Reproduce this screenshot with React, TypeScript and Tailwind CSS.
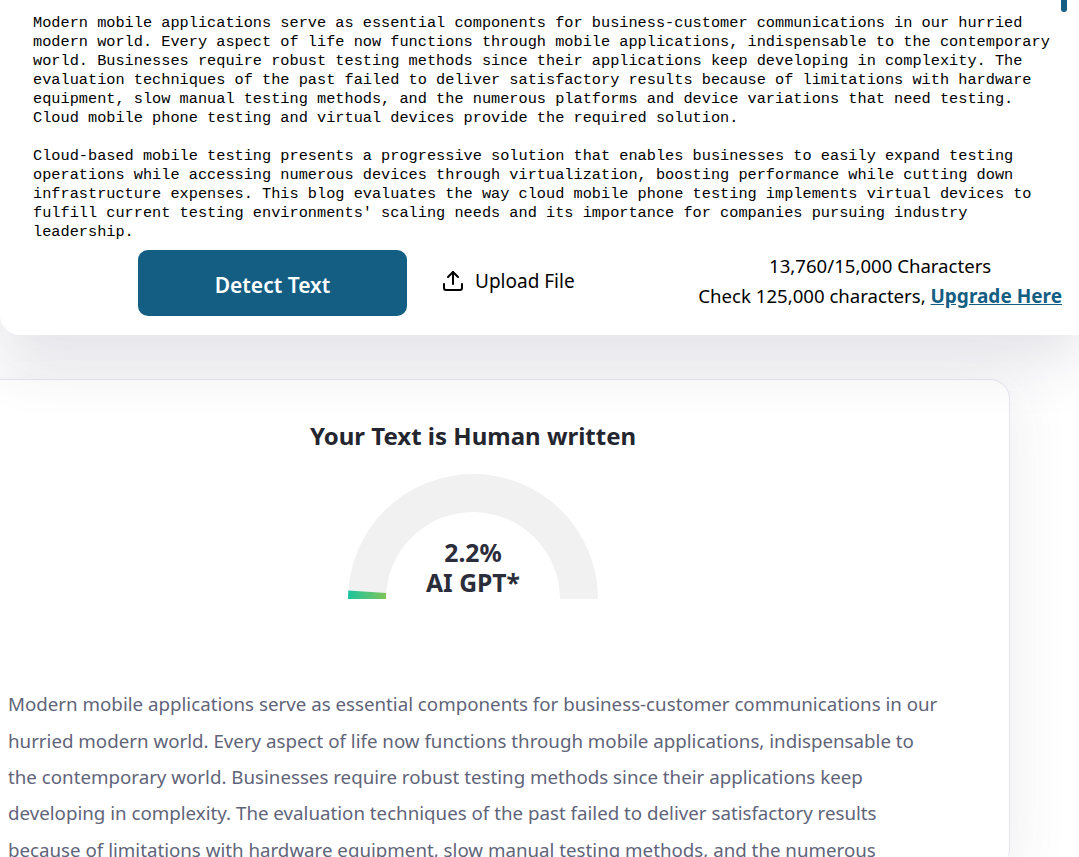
import { Upload } from "lucide-react";

const SANS = "font-['Noto_Sans',sans-serif]";

const inputText = `Modern mobile applications serve as essential components for business-customer communications in our hurried
modern world. Every aspect of life now functions through mobile applications, indispensable to the contemporary
world. Businesses require robust testing methods since their applications keep developing in complexity. The
evaluation techniques of the past failed to deliver satisfactory results because of limitations with hardware
equipment, slow manual testing methods, and the numerous platforms and device variations that need testing.
Cloud mobile phone testing and virtual devices provide the required solution.

Cloud-based mobile testing presents a progressive solution that enables businesses to easily expand testing
operations while accessing numerous devices through virtualization, boosting performance while cutting down
infrastructure expenses. This blog evaluates the way cloud mobile phone testing implements virtual devices to
fulfill current testing environments' scaling needs and its importance for companies pursuing industry
leadership.`;

const resultLines = [
  "Modern mobile applications serve as essential components for business-customer communications in our",
  "hurried modern world. Every aspect of life now functions through mobile applications, indispensable to",
  "the contemporary world. Businesses require robust testing methods since their applications keep",
  "developing in complexity. The evaluation techniques of the past failed to deliver satisfactory results",
  "because of limitations with hardware equipment, slow manual testing methods, and the numerous",
];

const Gauge = () => (
  <svg width="252" height="127" viewBox="0 0 252 127" className="block">
    <defs>
      <linearGradient id="gauge-fill" x1="0" y1="0" x2="1" y2="0">
        <stop offset="0%" stopColor="#1cc39c" />
        <stop offset="100%" stopColor="#80c45a" />
      </linearGradient>
    </defs>
    <path d="M0 126 A125 125 0 0 1 250 126 L212 126 A87 87 0 0 0 38 126 Z" fill="#f1f1f2" />
    <path d="M0 126 A125 125 0 0 1 0.3 117.4 L38.2 120 A87 87 0 0 0 38 126 Z" fill="url(#gauge-fill)" />
  </svg>
);

export default function App() {
  return (
    <div className={`relative h-[857px] w-[1079px] overflow-hidden bg-white ${SANS}`}>
      <section className="relative z-10 flex h-[335px] flex-col rounded-bl-[20px] bg-white shadow-[0_25px_60px_rgba(50,50,90,0.14)]">
        <div className="absolute right-[12px] top-0 h-[12px] w-[6px] rounded-b-[3px] bg-[#145e84]" />
        <pre className="pl-[33px] pt-[14px] font-['Liberation_Mono',monospace] text-[15.28px] leading-[19px] text-black">
          {inputText}
        </pre>
        <div className="relative mt-[8px] flex">
          <button className="ml-[138px] h-[66px] w-[269px] rounded-[10px] bg-[#145e84] pt-[5px] text-[21px] font-semibold text-white">
            Detect Text
          </button>
          <div className="ml-[34px] mt-[15px] flex h-[32px] items-center gap-[10px] text-[19px] text-black">
            <Upload className="h-[24px] w-[24px]" strokeWidth={2} />
            <span>Upload File</span>
          </div>
          <div className="ml-auto mr-[17px] mt-[1px] text-center text-[18.6px] leading-[30px] text-black">
            <div>13,760/15,000 Characters</div>
            <div>
              Check 125,000 characters,{" "}
              <a className="text-[19px] font-bold text-[#145e84] underline">Upgrade Here</a>
            </div>
          </div>
        </div>
      </section>

      <section className="ml-[-20px] mt-[44px] w-[1030px] rounded-[20px] border border-[#e6e6f2] bg-white pl-[27px] shadow-[0_10px_60px_rgba(60,60,90,0.1)]">
        <h2 className="mr-[71px] mt-[38px] text-center text-[24px] font-bold leading-[36px] text-[#24262f]">
          Your Text is Human written
        </h2>
        <div className="relative ml-[340px] mt-[19px] w-[252px]">
          <Gauge />
          <div className="absolute inset-x-0 bottom-[2px] pr-[2px] text-center text-[24.7px] font-bold leading-[30px] text-[#2b2d3a]">
            <div>2.2%</div>
            <div>AI GPT*</div>
          </div>
        </div>
        <div className="mt-[86.2px] text-[18.73px] leading-[36.4px] text-[#5f6479]">
          {resultLines.map((line) => (
            <p key={line} className="whitespace-nowrap">{line}</p>
          ))}
        </div>
      </section>
    </div>
  );
}
